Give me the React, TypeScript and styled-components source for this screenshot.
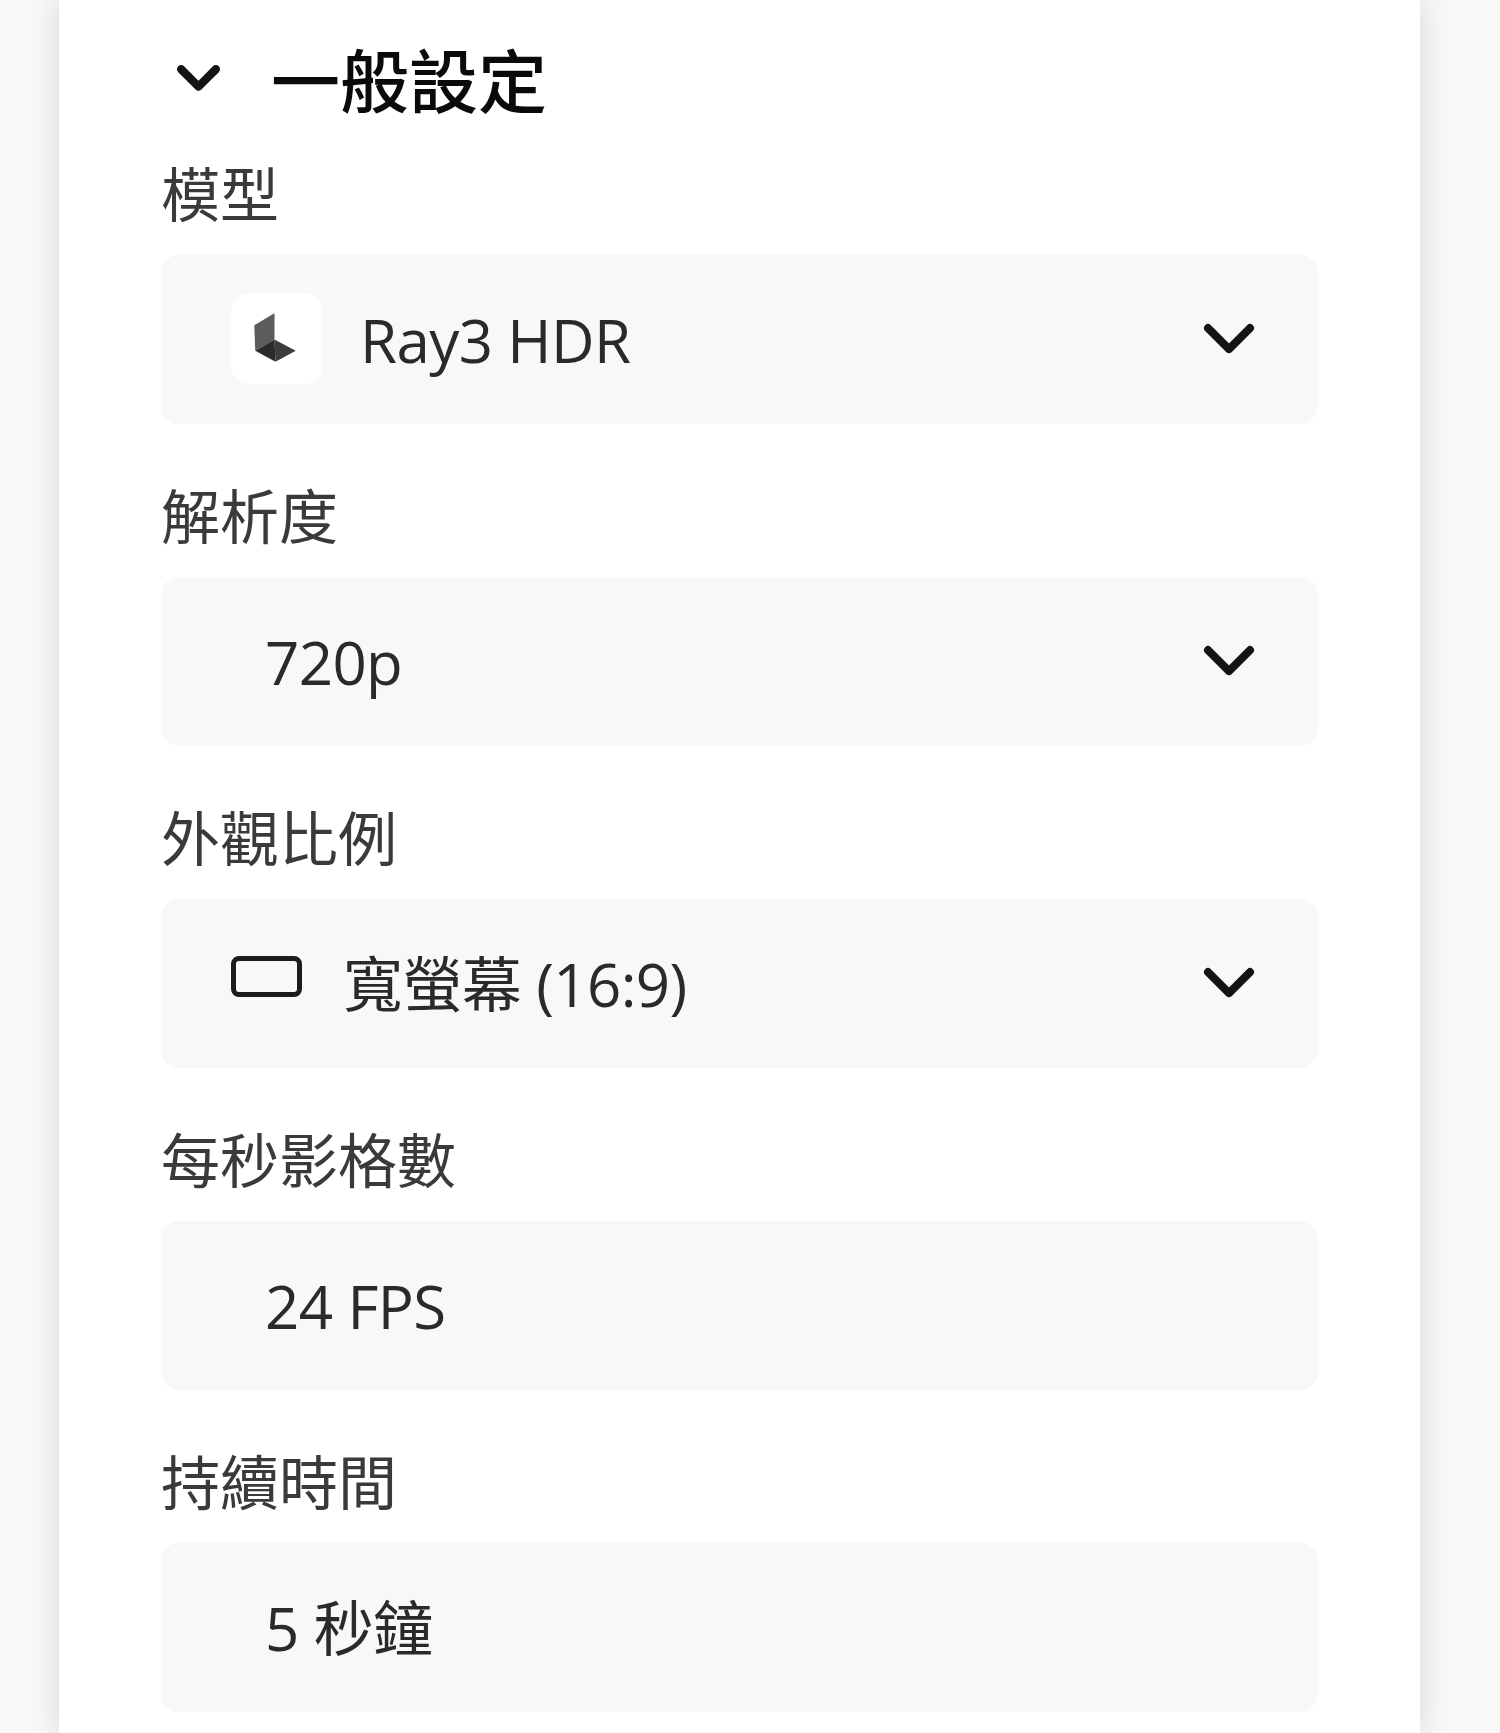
import React from "react";
import styled, { createGlobalStyle } from "styled-components";

const Global = createGlobalStyle`
  html, body { margin: 0; padding: 0; background: #f8f8f8; }
  body { font-family: "Open Sans", "Noto Sans CJK TC", sans-serif; }
`;

const Page = styled.div`
  height: 1733px;
  overflow: hidden;
  padding: 0 80px 0 59px;
  background: #f8f8f8;
`;

const Card = styled.main`
  height: 100%;
  box-sizing: border-box;
  background: #fff;
  box-shadow: 0 0 30px rgba(0, 0, 0, 0.14);
  padding: 34px 102px 0;
`;

const SectionHeader = styled.header`
  display: flex;
  align-items: center;
  gap: 51px;
  height: 88px;
  padding-left: 16px;
`;

const Heading = styled.h2`
  margin: 0;
  font: 500 69px/88px "Noto Sans CJK TC", sans-serif;
  color: #0a0a0a;
`;

const FieldList = styled.div`
  display: flex;
  flex-direction: column;
  gap: 48px;
  margin-top: 28px;
`;

const Field = styled.section`
  display: flex;
  flex-direction: column;
  gap: 21px;
`;

const Label = styled.label`
  font: 400 59px/84px "Noto Sans CJK TC", sans-serif;
  color: #3a3a3a;
`;

const Control = styled.div<{ $indent: number }>`
  display: flex;
  align-items: center;
  height: 169px;
  box-sizing: border-box;
  padding: 0 63px 0 ${(p) => p.$indent}px;
  border-radius: 18px;
  background: #f8f8f8;
`;

const LogoTile = styled.span`
  display: flex;
  width: 91px;
  height: 91px;
  flex: none;
  margin: 0 38px 2px 0;
  border-radius: 18px;
  background: #fff;
`;

const WideIcon = styled.span`
  flex: none;
  box-sizing: border-box;
  width: 71px;
  height: 41px;
  margin: 0 41px 15px 0;
  border: 5px solid #1c1c1c;
  border-radius: 8px;
`;

const Value = styled.span`
  flex: 1;
  font: 400 60px/80px "Open Sans", "Noto Sans CJK TC", sans-serif;
  letter-spacing: -0.6px;
  color: #2a2a2a;
`;

const Chevron = ({ size, stroke }: { size: number; stroke: number }) => (
  <svg width={size} height={size * 0.62} viewBox="0 0 52 32" fill="none" aria-hidden="true" style={{ flex: "none" }}>
    <path d="M5 5 L26 26 L47 5" stroke="#141414" strokeWidth={stroke} strokeLinecap="round" strokeLinejoin="round" />
  </svg>
);

const RayLogo = () => (
  <svg width="91" height="91" viewBox="0 0 90 90" aria-hidden="true">
    <polygon points="23,32 43,20 43,46 24,57" fill="#5c5c5c" />
    <polygon points="24,57 43,46 44,68" fill="#2b2b2b" />
    <polygon points="43,46 64,57 44,68" fill="#3d3d3d" />
  </svg>
);

type Row = { label: string; value: string; icon?: "logo" | "wide"; arrow?: boolean };

const rows: Row[] = [
  { label: "模型", value: "Ray3 HDR", icon: "logo", arrow: true },
  { label: "解析度", value: "720p", arrow: true },
  { label: "外觀比例", value: "寬螢幕 (16:9)", icon: "wide", arrow: true },
  { label: "每秒影格數", value: "24 FPS" },
  { label: "持續時間", value: "5 秒鐘" },
];

export default function App() {
  return (
    <>
      <Global />
      <Page>
        <Card>
          <SectionHeader>
            <Chevron size={43} stroke={10} />
            <Heading>一般設定</Heading>
          </SectionHeader>
          <FieldList>
            {rows.map((r) => (
              <Field key={r.label}>
                <Label>{r.label}</Label>
                <Control $indent={r.icon ? 70 : 104}>
                  {r.icon === "logo" && (
                    <LogoTile>
                      <RayLogo />
                    </LogoTile>
                  )}
                  {r.icon === "wide" && <WideIcon />}
                  <Value>{r.value}</Value>
                  {r.arrow && <Chevron size={52} stroke={8} />}
                </Control>
              </Field>
            ))}
          </FieldList>
        </Card>
      </Page>
    </>
  );
}
